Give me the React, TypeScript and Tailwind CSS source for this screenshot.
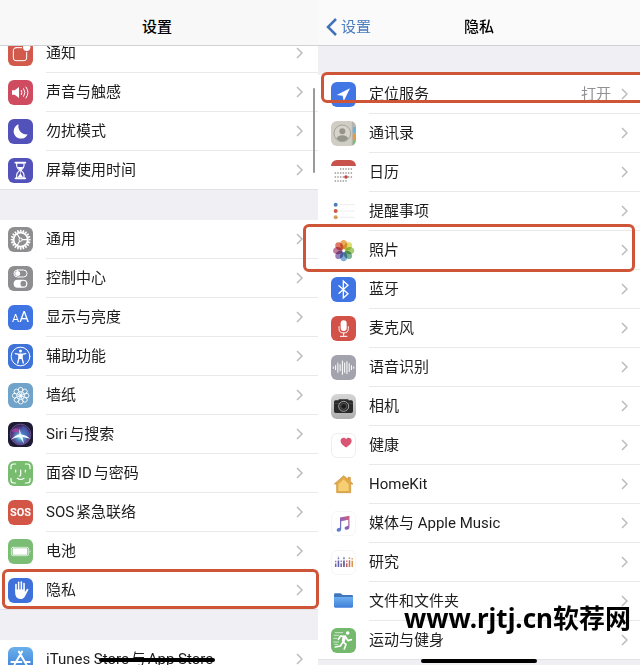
import type { ReactNode } from "react";
import clsx from "clsx";

type Row = {
  label: string;
  tile: string;
  icon: ReactNode;
  value?: string;
  mark?: string;
};

const line = { fill: "none", stroke: "#fff", strokeLinecap: "round", strokeLinejoin: "round" } as const;
const steps = (n: number) => Array.from({ length: n }, (_, i) => (i * 360) / n);

// all glyphs share a 75 unit box, the tile colour comes from the row
function Glyph({ children }: { children: ReactNode }) {
  return (
    <svg viewBox="0 0 75 75" className="size-full" aria-hidden="true">
      {children}
    </svg>
  );
}

function Speaker() {
  return (
    <Glyph>
      <path d="M12 31h8l13-10v33L20 44h-8z" fill="#fff" />
      <path d="M40 31q4 6 0 13M47 26q8 11 0 23M54 21q12 16 0 33" {...line} strokeWidth="3" />
    </Glyph>
  );
}

function Hourglass() {
  return (
    <Glyph>
      <path d="M22 14h30M22 61h30" {...line} strokeWidth="5" />
      <path d="M26 15v8q0 6 9 14q-9 8-9 14v9h22v-9q0-6-9-14q9-8 9-14v-8z" {...line} strokeWidth="3.5" />
      <path d="M28 27h18l-8 9v11l7 11H29l7-11V36z" fill="#fff" />
    </Glyph>
  );
}

function Gear() {
  return (
    <Glyph>
      {steps(20).map((a) => (
        <path key={a} d="M36 8h4l1 7h-6z" fill="#fff" transform={`rotate(${a} 38 38)`} />
      ))}
      <circle cx="38" cy="38" r="21" {...line} strokeWidth="5" />
      <circle cx="38" cy="38" r="5" {...line} strokeWidth="3" />
      <path d="M43 38h15M35 34l-8-14M35 42l-8 14" {...line} strokeWidth="3.5" />
    </Glyph>
  );
}

function Toggles() {
  return (
    <Glyph>
      <rect x="18" y="12" width="39" height="21" rx="10.5" {...line} strokeWidth="3" />
      <circle cx="29" cy="22.5" r="7.5" fill="#fff" />
      <rect x="17" y="41" width="41" height="24" rx="12" fill="#fff" />
      <circle cx="46" cy="53" r="8.5" fill="#8e8e90" />
    </Glyph>
  );
}

function Person() {
  return (
    <Glyph>
      <circle cx="37.5" cy="37.5" r="28" {...line} strokeWidth="3" />
      <circle cx="37.5" cy="21" r="4.5" fill="#fff" />
      <path d="M22 29l11 2v11l-4 15M53 29l-11 2v11l4 15M33 31h9" {...line} strokeWidth="4" />
      <path d="M32 29h11v16H32z" fill="#fff" />
    </Glyph>
  );
}

function Flower() {
  return (
    <Glyph>
      {steps(8).map((a) => (
        <g key={a} transform={`rotate(${a} 38 38)`}>
          <circle cx="38" cy="20" r="7" {...line} strokeWidth="2.5" />
          <ellipse cx="38" cy="31" rx="3" ry="5" {...line} strokeWidth="1.6" />
        </g>
      ))}
      <circle cx="38" cy="38" r="4" fill="#fff" />
    </Glyph>
  );
}

function Siri() {
  return (
    <Glyph>
      <defs>
        <radialGradient id="orb" cx="50%" cy="60%" r="60%">
          <stop offset="0" stopColor="#e9f8ff" />
          <stop offset=".3" stopColor="#4f9cc9" />
          <stop offset=".65" stopColor="#5c3f90" />
          <stop offset="1" stopColor="#2a1c48" />
        </radialGradient>
      </defs>
      <circle cx="37.5" cy="37.5" r="31" fill="url(#orb)" />
      <path d="M9 29C18 15 31 14 38 37C26 29 17 28 9 29z" fill="#b0469c" opacity=".75" />
      <path d="M44 10Q63 20 66 43Q50 43 39 38z" fill="#3d6ec2" opacity=".6" />
      <path d="M8 54Q25 38 34 37L34 20l5 17Q55 39 68 50Q52 47 43 44L48 65L36 46Q22 44 8 54z" fill="#effbff" />
      <circle cx="37.5" cy="37.5" r="31" fill="none" stroke="#7e689e" strokeWidth="2" />
    </Glyph>
  );
}

function Face() {
  return (
    <Glyph>
      <path d="M9 23v-6q0-8 8-8h6M52 9h6q8 0 8 8v6M66 52v6q0 8-8 8h-6M23 66h-6q-8 0-8-8v-6" {...line} strokeWidth="3.5" />
      <path d="M23 27v6M52 27v6M38 27v15q0 3-4 3M28 52q10 7 20 0" {...line} strokeWidth="3.5" />
    </Glyph>
  );
}

function Battery() {
  return (
    <Glyph>
      <rect x="10" y="25" width="52" height="25" rx="5" {...line} strokeWidth="2" />
      <rect x="14" y="28" width="44" height="19" rx="2" fill="#fff" />
      <path d="M65 33q5 4 0 9z" fill="#fff" />
    </Glyph>
  );
}

function Hand() {
  return (
    <Glyph>
      <path d="M24 38V20M32 34V13M40 34V12M48 36V17" {...line} strokeWidth="5" />
      <path d="M21.500 34H50.500V42L57 33Q61 31 61 35L52 53Q47 63 37 63Q21.500 62 21.500 45z" fill="#fff" />
      <path d="M28 19v16M36 15v19M44 17v18" fill="none" stroke="#3f71db" strokeWidth="1.500" />
    </Glyph>
  );
}

function AppStore() {
  return (
    <Glyph>
      <path d="M42 14L20 52M33 14l24 42M10 45h30M52 45h13M17 57l-3 5" {...line} strokeWidth="6" />
    </Glyph>
  );
}

function Contacts() {
  return (
    <Glyph>
      <path d="M64 0h11v18H64z" fill="#b8b7af" />
      <path d="M65 18h10v20H65z" fill="#6fb1de" />
      <path d="M65 38h10v20H65z" fill="#e49a4c" />
      <path d="M65 58h10v17H65z" fill="#7fb97b" />
      <path d="M64 0v75" stroke="#aaa99f" strokeWidth="2" />
      <circle cx="34" cy="37" r="25" fill="#d6d4cb" stroke="#9b9a91" strokeWidth="2.500" />
      <circle cx="34" cy="31" r="9" fill="#96958c" />
      <path d="M16 52q6-9 18-9t18 9q-7 9-18 9t-18-9z" fill="#96958c" />
    </Glyph>
  );
}

function Calendar() {
  const rows = [
    [2, 7],
    [0, 7],
    [0, 7],
    [0, 5],
  ];
  return (
    <Glyph>
      <path d="M0 0h75v18H0z" fill="#c8534c" />
      {rows.map(([from, to], y) =>
        Array.from({ length: to - from }, (_, i) => (
          <circle key={`${y}-${i}`} cx={13 + (from + i) * 8} cy={27 + y * 12} r="2.500" fill="#8d8585" />
        ))
      )}
      <circle cx="45" cy="51" r="5.500" fill="#c0453f" />
    </Glyph>
  );
}

function Reminders() {
  return (
    <Glyph>
      <circle cx="14" cy="17" r="6" fill="#4a7db9" />
      <circle cx="14" cy="36" r="6" fill="#ca5a43" />
      <circle cx="14" cy="55" r="6" fill="#d49b59" />
      <path d="M27 17h44M27 36h44M27 55h44" stroke="#e6e4e6" strokeWidth="2" />
    </Glyph>
  );
}

function Photos() {
  const petals = ["#e9a04c", "#dcd85a", "#9cc663", "#6dab90", "#70a2d4", "#8a74b4", "#bd6d98", "#d86a58"];
  return (
    <Glyph>
      {petals.map((fill, i) => (
        <ellipse
          key={fill}
          cx="38"
          cy="20"
          rx="11"
          ry="14"
          fill={fill}
          transform={`rotate(${i * 45} 38 38)`}
          className="opacity-90 mix-blend-multiply"
        />
      ))}
      <circle cx="38" cy="38" r="3" fill="#fff" />
    </Glyph>
  );
}

function Bluetooth() {
  return (
    <Glyph>
      <path d="M24 26l27 24-14 13V12l14 13-27 24" {...line} strokeWidth="4" strokeLinejoin="miter" />
    </Glyph>
  );
}

function Mic() {
  return (
    <Glyph>
      <rect x="29" y="13" width="18" height="32" rx="9" fill="#fff" />
      <path d="M24 32v6q0 13 14 13t14-13v-6M38 51v9M28 61h20" {...line} strokeWidth="3" />
    </Glyph>
  );
}

function Wave() {
  const bars = [2, 6, 14, 9, 20, 14, 18, 12, 6, 2];
  return (
    <Glyph>
      {bars.map((h, i) => (
        <path key={i} d={`M${7 + i * 6.8} ${38 - h}v${h * 2}`} {...line} strokeWidth="3" />
      ))}
    </Glyph>
  );
}

function Camera() {
  return (
    <Glyph>
      <path d="M14 19h9v-3h29v3h9q5 0 5 5v28q0 5-5 5H14q-5 0-5-5V24q0-5 5-5z" fill="#292929" />
      <path d="M9 28h57" stroke="#555" strokeWidth="2" />
      <circle cx="38" cy="37" r="15" fill="#292929" stroke="#bbb" strokeWidth="2.500" />
      <circle cx="38" cy="37" r="9" fill="#1c1c1c" stroke="#777" strokeWidth="2" />
    </Glyph>
  );
}

function Heart() {
  return (
    <Glyph>
      <path d="M46 44C32 35 28 29 28 22C28 12 41 8 46 17C51 8 64 12 64 22C64 29 60 35 46 44z" fill="#da5474" />
    </Glyph>
  );
}

function House() {
  return (
    <Glyph>
      <path d="M38 11L10 36h7v26h42V36h7l-8-8V16h-7v6z" fill="#e2aa48" stroke="#c98f36" strokeWidth="2" strokeLinejoin="round" />
      <path d="M38 22L22 37v20h31V37z" fill="#f6cf72" />
    </Glyph>
  );
}

function Note() {
  return (
    <Glyph>
      <defs>
        <linearGradient id="note" x1="0" y1="1" x2="1" y2="0">
          <stop offset="0" stopColor="#4d86cf" />
          <stop offset=".5" stopColor="#8465bb" />
          <stop offset="1" stopColor="#e05a72" />
        </linearGradient>
      </defs>
      <path
        d="M26 18L57 12V50Q57 57 49 58Q41 59 41 53Q41 47 53 45V25L30 30V56Q30 63 22 64Q15 65 15 59Q15 52 26 51z"
        fill="url(#note)"
      />
    </Glyph>
  );
}

function Research() {
  const bars: [number, number, string][] = [
    [12, 11, "#7764ae"],
    [21, 21, "#5b5ca5"],
    [30, 12, "#7564aa"],
    [39, 21, "#464f92"],
    [48, 12, "#bc5d68"],
    [57, 22, "#cf7146"],
    [66, 20, "#d69352"],
  ];
  return (
    <Glyph>
      {bars.map(([x, h, color]) => (
        <g key={x} stroke={color} strokeWidth="5">
          <path d={`M${x} 52v-${h}`} />
          <path d={`M${x} ${48 - h}v-5`} opacity=".8" />
        </g>
      ))}
      <path d="M21 22v-4M39 23v-4" stroke="#9aa9d2" strokeWidth="4" />
    </Glyph>
  );
}

function Folder() {
  return (
    <Glyph>
      <defs>
        <linearGradient id="folder" x1="0" y1="0" x2="0" y2="1">
          <stop offset="0" stopColor="#6eb0f0" />
          <stop offset="1" stopColor="#3f7ed8" />
        </linearGradient>
      </defs>
      <path d="M9 17q0-4 4-4h16l6 5h27q4 0 4 4v6H9z" fill="#4177bd" />
      <path d="M9 24h57v28q0 4-4 4H13q-4 0-4-4z" fill="url(#folder)" />
    </Glyph>
  );
}

function Runner() {
  return (
    <Glyph>
      <circle cx="50" cy="15" r="5.500" fill="#fff" />
      <path d="M43 24l-7 18 9 7-5 14M35 43l-7 11-15 3M43 25l-14-1-7 10M44 27l7 11 10-3" {...line} strokeWidth="5" />
      <path d="M35 25l11 2-6 16-8-3z" fill="#fff" />
      <path d="M13 14h22M9 22h14M8 31h9M8 42h15M11 49h9" {...line} strokeWidth="2" />
    </Glyph>
  );
}

const alerts: Row[] = [
  {
    label: "通知",
    tile: "bg-[#d15a4c]",
    icon: (
      <Glyph>
        <rect x="16" y="20" width="40" height="39" rx="8" {...line} strokeWidth="3" />
        <circle cx="56" cy="19" r="14" fill="#d15a4c" />
        <circle cx="56" cy="19" r="11" fill="#fff" />
      </Glyph>
    ),
  },
  { label: "声音与触感", tile: "bg-[#cf4b60]", icon: <Speaker /> },
  {
    label: "勿扰模式",
    tile: "bg-[#5352bb]",
    icon: (
      <Glyph>
        <path d="M32 16A22 22 0 1 0 59 46A24 24 0 0 1 32 16z" fill="#fff" />
      </Glyph>
    ),
  },
  { label: "屏幕使用时间", tile: "bg-[#5352bb]", icon: <Hourglass /> },
];

const general: Row[] = [
  { label: "通用", tile: "bg-[#8e8e90]", icon: <Gear /> },
  { label: "控制中心", tile: "bg-[#8e8e90]", icon: <Toggles /> },
  {
    label: "显示与亮度",
    tile: "bg-[#3f75e2]",
    icon: (
      <span className="flex h-full items-baseline justify-center font-['Roboto'] leading-[25px] text-white">
        <span className="text-[11px]">A</span>
        <span className="text-[15px]">A</span>
      </span>
    ),
  },
  { label: "辅助功能", tile: "bg-[#3f73d8]", icon: <Person /> },
  { label: "墙纸", tile: "bg-[#6fa3ca]", icon: <Flower /> },
  { label: "Siri与搜索", tile: "bg-[#1d1a35]", icon: <Siri /> },
  { label: "面容ID与密码", tile: "bg-[#78bd6f]", icon: <Face /> },
  {
    label: "SOS紧急联络",
    tile: "bg-[#d25546]",
    icon: (
      <span className="flex h-full items-center justify-center font-['Roboto'] text-[11px] font-bold text-white">SOS</span>
    ),
  },
  { label: "电池", tile: "bg-[#7cbd76]", icon: <Battery /> },
  { label: "隐私", tile: "bg-[#3f71db]", icon: <Hand />, mark: "-top-0.5 bottom-0 left-0.5 -right-px" },
];

const stores: Row[] = [
  { label: "iTunes Store与App Store", tile: "bg-linear-to-b from-[#6ab0ea] to-[#3c7bd6]", icon: <AppStore /> },
];

const privacy: Row[] = [
  {
    label: "定位服务",
    tile: "bg-[#4276e4]",
    value: "打开",
    mark: "-top-[3px] h-[31px] left-[3px] -right-2",
    icon: (
      <Glyph>
        <path d="M57 19L17 39l18 2 3 17z" fill="#fff" />
      </Glyph>
    ),
  },
  { label: "通讯录", tile: "bg-[#cfcdc4]", icon: <Contacts /> },
  { label: "日历", tile: "bg-white", icon: <Calendar /> },
  { label: "提醒事项", tile: "bg-white", icon: <Reminders /> },
  { label: "照片", tile: "bg-white", icon: <Photos />, mark: "-top-[7px] -bottom-0.5 -left-[15px] right-[5px]" },
  { label: "蓝牙", tile: "bg-[#3f74e4]", icon: <Bluetooth /> },
  { label: "麦克风", tile: "bg-[#d2524a]", icon: <Mic /> },
  { label: "语音识别", tile: "bg-[#a2a3ad]", icon: <Wave /> },
  { label: "相机", tile: "bg-linear-to-b from-[#d6d6d6] to-[#aeaeae]", icon: <Camera /> },
  { label: "健康", tile: "bg-white border border-[#eeeeee]", icon: <Heart /> },
  { label: "HomeKit", tile: "bg-white", icon: <House /> },
  { label: "媒体与 Apple Music", tile: "bg-white border border-[#f6f6f6]", icon: <Note /> },
  { label: "研究", tile: "bg-white border border-[#f6f6f6]", icon: <Research /> },
  { label: "文件和文件夹", tile: "bg-white", icon: <Folder /> },
  { label: "运动与健身", tile: "bg-[#74b96e]", icon: <Runner /> },
];

function Group({ rows, inset, trail }: { rows: Row[]; inset: string; trail: string }) {
  return (
    <ul className="border-b border-[#e2e2e6] bg-white">
      {rows.map((row, i) => (
        <li key={row.label} className="relative">
          <a href="#" className={clsx("flex items-center gap-[13px]", inset)}>
            <span className={clsx("size-[25px] shrink-0 overflow-hidden rounded-md", row.tile)}>{row.icon}</span>
            <span
              className={clsx(
                "flex flex-1 items-center justify-between",
                trail,
                i < rows.length - 1 ? "h-[39px] border-b border-[#e9e9eb]" : "h-[38px]"
              )}
            >
              <span className="whitespace-nowrap">{row.label}</span>
              <span className="flex items-center gap-[10px] text-[#929296]">
                {row.value}
                <svg viewBox="0 0 7 12" className="h-3 w-[7px]" aria-hidden="true">
                  <path d="M1 1l5 5-5 5" fill="none" stroke="#bcbcc0" strokeWidth="1.500" />
                </svg>
              </span>
            </span>
          </a>
          {row.mark && (
            <span className={clsx("pointer-events-none absolute z-10 rounded-md border-[3px] border-[#cf5539]", row.mark)} />
          )}
        </li>
      ))}
    </ul>
  );
}

function HomeBar({ place }: { place: string }) {
  return <span className={clsx("absolute h-1 w-[116px] -translate-x-1/2 rounded-full bg-black", place)} />;
}

export default function App() {
  return (
    <main className="relative grid h-screen grid-cols-[159fr_161fr] grid-rows-1 overflow-hidden bg-[#efeff4] font-['Roboto','Noto_Sans_CJK_SC',sans-serif] text-[15px] leading-5 text-[#1c1c1c] [text-autospace:normal]">
      <section className="relative flex min-w-0 flex-col">
        <header className="z-10 flex h-[46px] shrink-0 items-center justify-center border-b border-[#d2d2d4] bg-[#f8f8f8] pt-2 pr-1">
          <h1 className="font-medium text-black">设置</h1>
        </header>
        <div className="-mt-3 flex flex-col gap-[30px]">
          <Group rows={alerts} inset="pl-2" trail="pr-[15px]" />
          <Group rows={general} inset="pl-2" trail="pr-[15px]" />
          <Group rows={stores} inset="pl-2" trail="pr-[15px]" />
        </div>
        <span className="absolute top-[88px] right-[3px] h-[85px] w-0.5 rounded-full bg-[#9a9a9c]" />
        <HomeBar place="bottom-[3px] left-[157px]" />
      </section>

      <section className="relative flex min-w-0 flex-col">
        <header className="grid h-[46px] shrink-0 grid-cols-3 items-center border-b border-[#d2d2d4] bg-[#fafafa] pt-2">
          <button type="button" className="flex items-center gap-1 pl-2 text-[#4a7cc0]">
            <svg viewBox="0 0 11 18" className="h-[18px] w-[11px]" aria-hidden="true">
              <path d="M10 1L2 9l8 8" fill="none" stroke="#4273b8" strokeWidth="2.500" />
            </svg>
            设置
          </button>
          <h1 className="text-center font-medium text-black">隐私</h1>
        </header>
        <div className="pt-[29px]">
          <Group rows={privacy} inset="pl-[13px]" trail="pr-3" />
        </div>
        <HomeBar place="bottom-0.5 left-1/2" />
      </section>

      <p className="absolute right-[9px] bottom-[29px] z-20 font-['Noto_Sans','Noto_Sans_CJK_SC',sans-serif] text-[26px] leading-9 font-bold whitespace-nowrap text-black [text-autospace:no-autospace]">
        www.rjtj.cn软荐网
      </p>
    </main>
  );
}
